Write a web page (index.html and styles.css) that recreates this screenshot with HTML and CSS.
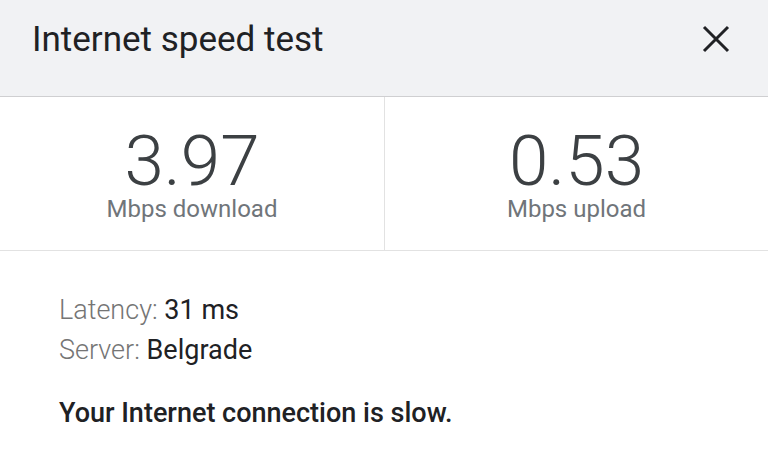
FILE: index.html
```
<!doctype html>
<html>
  <head>
    <title>Internet speed test</title>
    <meta name="viewport" content="width=device-width, initial-scale=1.0" />
    <meta charset="utf-8" />
    <link rel="stylesheet" href="styles.css">
  </head>
  <body>
    <div id="header">
      <span class="title">Internet speed test</span>
      <button class="close" aria-label="Close">
        <svg width="28" height="28" viewBox="0 0 28 28">
          <path d="M2 2 L26 26 M26 2 L2 26" stroke="#202124" stroke-width="3" fill="none" />
        </svg>
      </button>
    </div>
    <div id="speeds">
      <div class="speed">
        <div class="value">3.97</div>
        <div class="unit">Mbps download</div>
      </div>
      <div class="speed">
        <div class="value">0.53</div>
        <div class="unit">Mbps upload</div>
      </div>
    </div>
    <div id="details">
      <div class="row"><span class="key">Latency:</span> 31 ms</div>
      <div class="row"><span class="key">Server:</span> Belgrade</div>
      <div class="verdict">Your Internet connection is slow.</div>
    </div>
  </body>
</html>
```
FILE: styles.css
```
* {
  box-sizing: border-box;
}

body {
  margin: 0;
  padding: 0;
  background: #ffffff;
  color: #202124;
  font-family: Roboto, "Noto Sans", sans-serif;
}

#header {
  height: 97px;
  background: #f1f2f4;
  border-bottom: 1px solid #cfcfd1;
  display: flex;
  align-items: center;
  justify-content: space-between;
  padding: 0 38px 18px 32px;
}

.title {
  font-size: 35px;
  color: #202124;
}

.close {
  background: none;
  border: none;
  padding: 0;
  display: flex;
}

#speeds {
  display: grid;
  grid-template-columns: 1fr 1fr;
  border-bottom: 1px solid #e2e2e2;
}

.speed {
  height: 153px;
  display: flex;
  flex-direction: column;
  align-items: center;
  padding-top: 32px;
}

.speed + .speed {
  border-left: 1px solid #e2e2e2;
}

.value {
  font-size: 71px;
  font-weight: 300;
  line-height: 64px;
  color: #3c4043;
}

.unit {
  font-size: 24px;
  font-weight: 400;
  line-height: 28px;
  color: #70757a;
  margin-top: 2px;
}

#details {
  padding: 39px 59px;
}

.row {
  font-size: 27px;
  line-height: 40px;
  color: #202124;
}

.key {
  font-weight: 300;
  color: #757575;
}

.verdict {
  margin-top: 27px;
  font-size: 27px;
  font-weight: 500;
  color: #202124;
}
```
